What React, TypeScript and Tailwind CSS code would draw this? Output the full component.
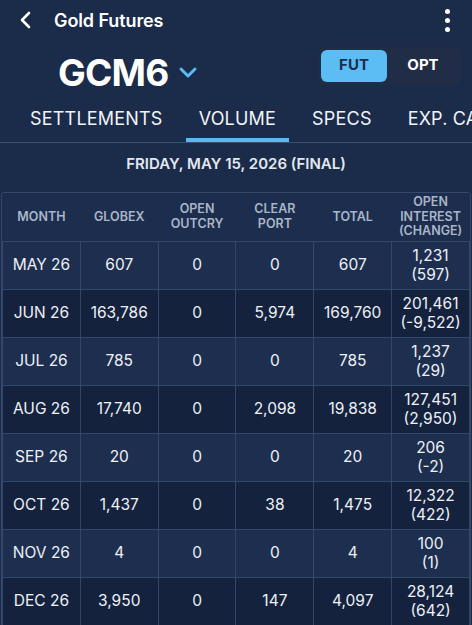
import React from "react";

const rows = [
  ["MAY 26", "607", "0", "0", "607", "1,231", "(597)"],
  ["JUN 26", "163,786", "0", "5,974", "169,760", "201,461", "(-9,522)"],
  ["JUL 26", "785", "0", "0", "785", "1,237", "(29)"],
  ["AUG 26", "17,740", "0", "2,098", "19,838", "127,451", "(2,950)"],
  ["SEP 26", "20", "0", "0", "20", "206", "(-2)"],
  ["OCT 26", "1,437", "0", "38", "1,475", "12,322", "(422)"],
  ["NOV 26", "4", "0", "0", "4", "100", "(1)"],
  ["DEC 26", "3,950", "0", "147", "4,097", "28,124", "(642)"],
];

export default function App() {
  return (
    <div
      className="w-[472px] h-[625px] overflow-hidden bg-[#1b2b4a] text-white"
      style={{ fontFamily: "Inter, 'Noto Sans', sans-serif" }}
    >
      {/* Top bar */}
      <div className="h-[40px] flex items-center pl-[18px] pr-[22px]">
        <svg width="16" height="20" viewBox="0 0 16 20" fill="none">
          <path d="M11 3 L4 10 L11 17" stroke="white" strokeWidth="2.6" strokeLinecap="round" strokeLinejoin="round" />
        </svg>
        <span className="ml-[20px] text-[18px] font-semibold tracking-[-0.1px]">Gold Futures</span>
        <div className="ml-auto flex flex-col gap-[4px] items-center">
          <span className="w-[5px] h-[5px] rounded-full bg-white" />
          <span className="w-[5px] h-[5px] rounded-full bg-white" />
          <span className="w-[5px] h-[5px] rounded-full bg-white" />
        </div>
      </div>

      {/* Symbol row */}
      <div className="h-[57px] flex items-center pl-[58px] pr-[10px]">
        <span className="text-[37px] font-bold leading-none tracking-[-0.8px] mt-[8px]">GCM6</span>
        <svg className="ml-[10px] mt-[6px]" width="20" height="14" viewBox="0 0 20 14" fill="none">
          <path d="M3 4 L10 11 L17 4" stroke="#5bb8f0" strokeWidth="3" strokeLinecap="round" strokeLinejoin="round" />
        </svg>
        <div className="ml-auto mt-[-6px] flex items-center p-[3px] rounded-[8px] bg-[#212d46] w-[144px] h-[38px]">
          <div className="w-[66px] h-[32px] rounded-[6px] bg-[#5cbcf4] flex items-center justify-center text-[15px] font-bold text-[#1b2d4d]">
            FUT
          </div>
          <div className="flex-1 flex items-center justify-center text-[15px] font-bold text-white">OPT</div>
        </div>
      </div>

      {/* Tabs */}
      <div className="h-[46px] border-b border-[#3d5172] flex pl-[17px] gap-[10px] whitespace-nowrap overflow-hidden">
        {["SETTLEMENTS", "VOLUME", "SPECS", "EXP. CALENDAR"].map((t, i) => (
          <div key={t} className="relative px-[13px] flex items-center text-[18px] text-[#f1f4f8] tracking-[0.2px] mt-[-2px]">
            {t}
            {i === 1 && <span className="absolute left-0 right-0 bottom-[-1px] h-[5px] bg-[#5bb8f0]" />}
          </div>
        ))}
      </div>

      {/* Date */}
      <div className="h-[49px] flex items-center justify-center text-[15px] font-semibold text-[#e3e8ef] pb-[7px]">
        FRIDAY, MAY 15, 2026 (FINAL)
      </div>

      {/* Table */}
      <div className="mx-[1px] border border-[#35486a] rounded-[3px] overflow-hidden">
        <table className="w-full table-fixed border-collapse">
          <thead>
            <tr className="h-[48px] bg-[#1c2d4d]">
              {[["MONTH"], ["GLOBEX"], ["OPEN", "OUTCRY"], ["CLEAR", "PORT"], ["TOTAL"], ["OPEN", "INTEREST", "(CHANGE)"]].map((h, i) => (
                <th
                  key={i}
                  className="p-0 text-[12.5px] font-semibold text-[#a9b5c8] leading-[14.5px] text-center align-middle"
                >
                  {h.map((l) => (
                    <div key={l}>{l}</div>
                  ))}
                </th>
              ))}
            </tr>
          </thead>
          <tbody>
            {rows.map((r, ri) => (
              <tr key={ri} className={`h-[48px] ${ri % 2 === 0 ? "bg-[#1d2e4f]" : "bg-[#14223e]"}`}>
                {r.slice(0, 5).map((c, ci) => (
                  <td
                    key={ci}
                    className="p-0 border border-[#34476a] text-center align-middle text-[15.5px] text-[#eef1f6]"
                  >
                    {c}
                  </td>
                ))}
                <td className="p-0 border border-[#34476a] text-center align-middle text-[15.5px] text-[#eef1f6] leading-[19px]">
                  <div>{r[5]}</div>
                  <div>{r[6]}</div>
                </td>
              </tr>
            ))}
          </tbody>
        </table>
      </div>
    </div>
  );
}
